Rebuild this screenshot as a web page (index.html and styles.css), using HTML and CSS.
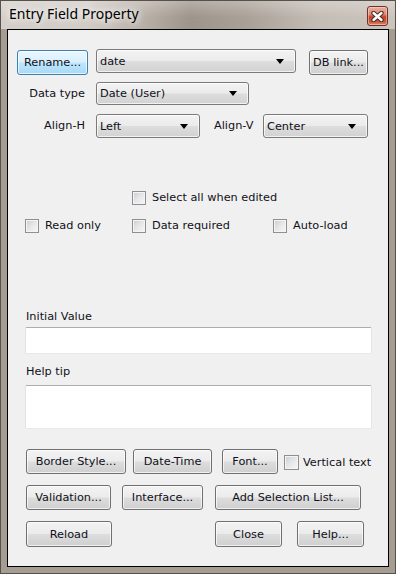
FILE: index.html
```html
<!DOCTYPE html>
<html lang="en">
<head>
  <meta charset="UTF-8" />
  <title>Entry Field Property</title>
  <link rel="stylesheet" href="styles.css">
</head>
<body>

  <div class="window">
    <div class="titlebar">
      <span class="title">Entry Field Property</span>
      <button class="close-btn">
        <svg width="13" height="11" viewBox="0 0 13 11">
          <path d="M2.5 2 L10.5 9 M10.5 2 L2.5 9" stroke="#4b2c24" stroke-width="4.4" stroke-linecap="round"/>
          <path d="M2.5 2 L10.5 9 M10.5 2 L2.5 9" stroke="#ffffff" stroke-width="2.4" stroke-linecap="round"/>
        </svg>
      </button>
    </div>

    <div class="client">
      <!-- name row -->
      <div class="row row-name">
        <button class="btn btn-focus btn-rename">Rename...</button>
        <div class="combo combo-name"><span>date</span><i class="arrow"></i></div>
        <button class="btn btn-dblink">DB link...</button>
      </div>

      <div class="row row-type">
        <label class="field-label">Data type</label>
        <div class="combo combo-type"><span>Date (User)</span><i class="arrow"></i></div>
      </div>

      <div class="row row-align">
        <label class="field-label">Align-H</label>
        <div class="combo combo-alignh"><span>Left</span><i class="arrow"></i></div>
        <label class="field-label label-alignv">Align-V</label>
        <div class="combo combo-alignv"><span>Center</span><i class="arrow"></i></div>
      </div>

      <!-- options -->
      <div class="check-grid check-top">
        <div class="check check-col2"><span class="box"></span>Select all when edited</div>
      </div>
      <div class="check-grid check-row">
        <div class="check"><span class="box"></span>Read only</div>
        <div class="check"><span class="box"></span>Data required</div>
        <div class="check"><span class="box"></span>Auto-load</div>
      </div>

      <div class="text-label label-initial">Initial Value</div>
      <div class="textbox textbox-initial"></div>
      <div class="text-label label-help">Help tip</div>
      <div class="textbox textbox-help"></div>

      <!-- buttons -->
      <div class="row btn-row btn-row1">
        <button class="btn btn-border">Border Style...</button>
        <button class="btn btn-datetime">Date-Time</button>
        <button class="btn btn-font">Font...</button>
        <div class="check check-vertical"><span class="box"></span>Vertical text</div>
      </div>
      <div class="row btn-row btn-row2">
        <button class="btn btn-validation">Validation...</button>
        <button class="btn btn-interface">Interface...</button>
        <button class="btn btn-addlist">Add Selection List...</button>
      </div>
      <div class="row btn-row btn-row3">
        <button class="btn btn-reload">Reload</button>
        <button class="btn btn-close">Close</button>
        <button class="btn btn-help">Help...</button>
      </div>
    </div>
  </div>

</body>
</html>
```

FILE: styles.css
```css
:root {
  --frame: #a59c92;
  --face: #f0f0f0;
  --text: #10101a;
  --ui-font: "DejaVu Sans", sans-serif;
}

body {
  margin: 0;
  font-family: var(--ui-font);
  font-size: 11.3px;
  color: var(--text);
}

.window {
  width: 396px;
  height: 574px;
  box-sizing: border-box;
  border: 1px solid #57514b;
  background: var(--frame);
  padding: 0 6px 6px;
  display: flex;
  flex-direction: column;
}

.titlebar {
  height: 28px;
  margin: 0 -6px;
  padding: 0 7px 0 8px;
  display: flex;
  align-items: flex-start;
  justify-content: space-between;
  background:
    linear-gradient(180deg, rgba(255,255,255,0.25), rgba(255,255,255,0) 60%),
    linear-gradient(90deg, #d4cfca 0%, #d2ccc6 22%, #b9b1a8 36%, #9d948a 48%, #a9a097 62%, #c4bdb5 80%, #cbc4bc 100%);
}

.title {
  font-family: "Noto Sans", sans-serif;
  font-size: 14px;
  line-height: 19px;
  margin-top: 3px;
  color: #000;
  text-shadow: 0 0 6px #fff, 0 0 10px #fff;
}

.close-btn {
  width: 21px;
  height: 20px;
  margin-top: 5px;
  padding: 0;
  border: 1px solid #6e3227;
  border-radius: 3px;
  background: linear-gradient(180deg, #eab0a2 0%, #dc8a76 40%, #c4442a 55%, #c9553a 80%, #dc8a6d 100%);
  box-shadow: inset 0 0 0 1px rgba(255,220,210,0.5);
  display: flex;
  align-items: center;
  justify-content: center;
}

.client {
  flex: 1;
  border: 1px solid #000;
  background: var(--face);
  padding-top: 19px;
  display: flex;
  flex-direction: column;
}

.row {
  display: flex;
  align-items: flex-start;
}

/* buttons */
.btn {
  box-sizing: border-box;
  height: 25px;
  padding: 0;
  border: 1px solid #707070;
  border-radius: 3px;
  background: linear-gradient(180deg, #f3f3f3 0%, #ebebeb 48%, #dddddd 52%, #cfcfcf 100%);
  box-shadow: inset 0 0 0 1px rgba(255,255,255,0.7);
  font: inherit;
  color: var(--text);
  flex: none;
}

.btn-focus {
  border-color: #3c7fb1;
  background: linear-gradient(180deg, #eaf6fd 0%, #d9f0fc 48%, #bee6fd 52%, #a7d9f5 100%);
}

/* combo boxes */
.combo {
  box-sizing: border-box;
  height: 23px;
  border: 1px solid #7a7a7a;
  border-radius: 3px;
  background: linear-gradient(180deg, #f3f3f3 0%, #ebebeb 48%, #dddddd 52%, #d2d2d2 100%);
  box-shadow: inset 0 0 0 1px rgba(255,255,255,0.7);
  display: flex;
  align-items: center;
  justify-content: space-between;
  padding: 0 11px 0 3px;
  flex: none;
}

.arrow {
  width: 0;
  height: 0;
  border-left: 4px solid transparent;
  border-right: 4px solid transparent;
  border-top: 5px solid #000;
}

.field-label {
  width: 71px;
  box-sizing: border-box;
  padding-right: 3px;
  text-align: right;
  line-height: 23px;
  flex: none;
}

.row-name {
  padding-left: 9px;
  height: 26px;
}

.btn-rename { width: 71px; margin-top: 1px; }
.combo-name { width: 200px; height: 24px; margin-left: 8px; }
.btn-dblink { width: 59px; margin-top: 1px; margin-left: 13px; }

.row-type {
  padding-left: 9px;
  margin-top: 7px;
}

.combo-type { width: 153px; margin-left: 8px; }

.row-align {
  padding-left: 9px;
  margin-top: 9px;
}

.combo-alignh { width: 104px; height: 24px; margin-left: 8px; }
.label-alignv { width: 41px; padding-right: 0; margin-left: 14px; text-align: left; }
.combo-alignv { width: 105px; height: 24px; margin-left: 8px; }

/* check boxes */
.check-grid {
  display: grid;
  grid-template-columns: 107px 141px auto;
  padding-left: 17px;
}

.check-top { margin-top: 52px; }
.check-row { margin-top: 13px; }
.check-col2 { grid-column: 2; }

.check {
  display: flex;
  align-items: center;
  gap: 6px;
  height: 15px;
  white-space: nowrap;
}

.box {
  width: 14px;
  height: 14px;
  box-sizing: border-box;
  border: 1px solid #8f8f8f;
  background: linear-gradient(135deg, #c9ccd1 0%, #e6e7e9 50%, #f7f7f7 100%);
  box-shadow: inset 0 0 0 1px #f4f4f4;
  flex: none;
}

/* text fields */
.text-label {
  padding-left: 18px;
  line-height: 14px;
}

.label-initial { margin-top: 77px; }
.label-help { margin-top: 11px; }

.textbox {
  box-sizing: border-box;
  margin-left: 17px;
  width: 347px;
  background: #fff;
  border: 1px solid #e2e3ea;
  border-top-color: #abadb3;
  border-bottom-color: #e3e9ef;
  border-radius: 2px;
}

.textbox-initial { height: 27px; margin-top: 3px; }
.textbox-help { height: 44px; margin-top: 6px; }

/* bottom buttons */
.btn-row { padding-left: 18px; }
.btn-row1 { margin-top: 20px; }
.btn-row2 { margin-top: 11px; }
.btn-row3 { margin-top: 11px; }

.btn-row1 .btn { height: 25px; }
.btn-border { width: 100px; }
.btn-datetime { width: 79px; margin-left: 7px; }
.btn-font { width: 56px; margin-left: 10px; }
.check-vertical { margin-left: 6px; margin-top: 6px; gap: 4px; }
.check-vertical .box { width: 15px; height: 15px; }

.btn-validation { width: 85px; }
.btn-interface { width: 81px; margin-left: 11px; }
.btn-addlist { width: 146px; margin-left: 12px; }

.btn-row3 .btn { height: 26px; }
.btn-reload { width: 86px; }
.btn-close { width: 67px; margin-left: 103px; }
.btn-help { width: 67px; margin-left: 15px; }
```
